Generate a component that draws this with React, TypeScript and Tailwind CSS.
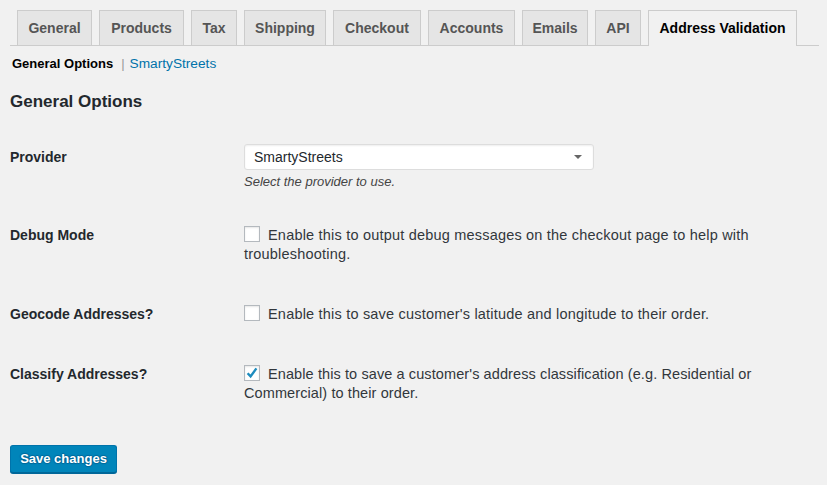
import React from "react";

const tabs = [
  { label: "General", w: "w-[75px]" },
  { label: "Products", w: "w-[85px]" },
  { label: "Tax", w: "w-[46px]" },
  { label: "Shipping", w: "w-[82px]" },
  { label: "Checkout", w: "w-[88px]" },
  { label: "Accounts", w: "w-[87px]" },
  { label: "Emails", w: "w-[66px]" },
  { label: "API", w: "w-[46px]" },
];

function Checkbox({ checked }: { checked?: boolean }) {
  return (
    <span className="relative mr-[8px] inline-block h-[16px] w-[16px] align-[-2px] border border-[#b4b9be] bg-white shadow-[inset_0_1px_2px_rgba(0,0,0,0.1)]">
      {checked ? (
        <svg viewBox="0 0 16 16" className="absolute left-[-1px] top-[-1px] h-[16px] w-[16px]">
          <path d="M3.6 8.2 L6.6 11.4 L12.4 3.4" fill="none" stroke="#1e8cbe" strokeWidth="2.4" strokeLinecap="butt" strokeLinejoin="miter" />
        </svg>
      ) : null}
    </span>
  );
}

export default function App() {
  return (
    <div className="min-h-[485px] w-[827px] bg-[#f1f1f1] pt-[10px] font-['Liberation_Sans',Arial,sans-serif] text-[#23282d]">
      <nav className="ml-[10px] mr-[8px] flex h-[36px] items-end gap-[7px] border-b border-[#ccc] pl-[7px]">
        {tabs.map((t) => (
          <div
            key={t.label}
            className={`${t.w} flex h-[35px] items-center justify-center border border-b-0 border-[#ccc] bg-[#e5e5e5] text-[14px] font-bold text-[#555]`}
          >
            {t.label}
          </div>
        ))}
        <div className="-mb-px flex h-[36px] w-[149px] items-center justify-center border border-b-0 border-[#ccc] bg-[#f1f1f1] pb-px text-[14px] font-bold text-black">
          Address Validation
        </div>
      </nav>

      <div className="px-[10px]">
        <p className="mt-[8px] h-[20px] pl-[2px] text-[13px] leading-[20px]">
          <span className="font-bold text-black">General Options</span>
          <span className="ml-[8px] text-[#999]">|</span>
          <span className="ml-[5px] text-[13.7px] text-[#0073aa]">SmartyStreets</span>
        </p>

        <h2 className="mt-[16px] h-[24px] text-[17px] font-bold leading-[24px]">General Options</h2>

        <div className="mt-[30px] flex">
          <div className="w-[234px] text-[14px] font-bold leading-[26px]">Provider</div>
          <div>
            <div className="flex h-[26px] w-[350px] items-center justify-between rounded-[3px] border border-[#ddd] bg-white pl-[9px] pr-[11px] text-[14px] shadow-[inset_0_1px_2px_rgba(0,0,0,0.07)]">
              <span>SmartyStreets</span>
              <span className="h-0 w-0 border-x-[4px] border-t-[4px] border-x-transparent border-t-[#666]" />
            </div>
            <p className="mt-[3px] text-[13px] italic leading-[18px] text-[#444]">Select the provider to use.</p>
          </div>
        </div>

        <div className="mt-[35px] flex">
          <div className="w-[234px] text-[14px] font-bold leading-[19px]">Debug Mode</div>
          <p className="w-[560px] text-[14.5px] leading-[19px] tracking-[0.2px] text-[#32373c]">
            <Checkbox />
            Enable this to output debug messages on the checkout page to help with troubleshooting.
          </p>
        </div>

        <div className="mt-[41px] flex">
          <div className="w-[234px] text-[14px] font-bold leading-[19px]">Geocode Addresses?</div>
          <p className="w-[560px] text-[14.5px] leading-[19px] tracking-[0.2px] text-[#32373c]">
            <Checkbox />
            Enable this to save customer's latitude and longitude to their order.
          </p>
        </div>

        <div className="mt-[41px] flex">
          <div className="w-[234px] text-[14px] font-bold leading-[19px]">Classify Addresses?</div>
          <p className="w-[560px] text-[14.5px] leading-[19px] tracking-[0.1px] text-[#32373c]">
            <Checkbox checked />
            Enable this to save a customer's address classification (e.g. Residential or Commercial) to their order.
          </p>
        </div>

        <button className="mt-[42px] flex h-[28px] w-[107px] items-center justify-center rounded-[3px] border border-[#0073aa] border-b-[#006799] bg-[#0085ba] text-[13px] font-bold text-white shadow-[0_1px_0_#006799] [text-shadow:0_-1px_1px_#006799,1px_0_1px_#006799,0_1px_1px_#006799,-1px_0_1px_#006799]">
          Save changes
        </button>
      </div>
    </div>
  );
}
